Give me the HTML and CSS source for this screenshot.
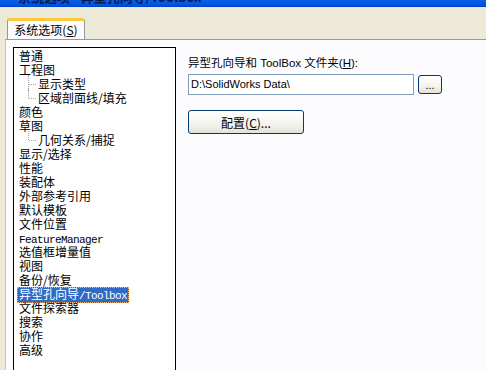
FILE: index.html
```html
<!DOCTYPE html>
<html lang="zh-CN">
<head>
    <meta charset="UTF-8">
    <title>系统选项 - 异型孔向导/Toolbox</title>
    <link rel="stylesheet" href="styles.css">
</head>
<body>

    <div class="titlebar">
        <span class="title-text">系统选项 - 异型孔向导/Toolbox</span>
    </div>

    <div class="dialog">
        <div class="tabs">
            <div class="tab">系统选项(<u>S</u>)</div>
        </div>

        <div class="panel">
            <ul class="tree">
                <li>普通</li>
                <li>工程图</li>
                <li class="child">显示类型</li>
                <li class="child last">区域剖面线/填充</li>
                <li>颜色</li>
                <li>草图</li>
                <li class="child last">几何关系/捕捉</li>
                <li>显示/选择</li>
                <li>性能</li>
                <li>装配体</li>
                <li>外部参考引用</li>
                <li>默认模板</li>
                <li>文件位置</li>
                <li><span class="mono">FeatureManager</span></li>
                <li>选值框增量值</li>
                <li>视图</li>
                <li>备份/恢复</li>
                <li><span class="selected">异型孔向导<span class="mono">/Toolbox</span></span></li>
                <li>文件探索器</li>
                <li>搜索</li>
                <li>协作</li>
                <li>高级</li>
            </ul>

            <div class="options">
                <div class="label">异型孔向导和 ToolBox 文件夹(<u>H</u>):</div>
                <div class="path-row">
                    <div class="textbox">D:\SolidWorks Data\</div>
                    <button class="btn btn-small">...</button>
                </div>
                <button class="btn btn-config">配置(<u>C</u>)...</button>
            </div>
        </div>
    </div>

</body>
</html>
```

FILE: styles.css
```css
body {
    margin: 0;
    width: 486px;
    height: 370px;
    overflow: hidden;
    background-color: #ECE9D8;
    font-family: "Noto Sans CJK SC", sans-serif;
    font-size: 12px;
    color: #000;
}

.titlebar {
    height: 7px;
    overflow: hidden;
    background: linear-gradient(to bottom, #0A5FE8, #0053E0 70%, #003FC8);
}

.title-text {
    display: block;
    margin-top: -11px;
    padding-left: 18px;
    font-weight: bold;
    font-size: 13px;
    line-height: 16px;
    color: #0A1A50;
}

.dialog {
    margin-left: 5px;
}

.tabs {
    display: flex;
    padding: 11px 0 0 2px;
    height: 21px;
}

.tab {
    width: 76px;
    height: 18px;
    background-color: #FCFCFE;
    border: 1px solid #919B9C;
    border-bottom: none;
    border-top: 3px solid #FFC83C;
    border-radius: 3px 3px 0 0;
    line-height: 18px;
    text-align: center;
    position: relative;
    z-index: 1;
    margin-bottom: -1px;
}

.panel {
    display: flex;
    align-items: flex-start;
    height: 330px;
    background-color: #FCFCFE;
    border-top: 1px solid #919B9C;
    border-left: 1px solid #C8C6BC;
    padding: 7px 0 0 7px;
}

.tree {
    list-style: none;
    margin: 0;
    padding: 1px 0 0 0;
    width: 161px;
    height: 340px;
    background-color: #fff;
    border: 1px solid #000;
}

.tree li {
    position: relative;
    height: 14px;
    line-height: 14px;
    padding-left: 5px;
    white-space: nowrap;
}

.tree li.child {
    padding-left: 24px;
}

/* dotted tree lines */
.tree li.child::before {
    content: "";
    position: absolute;
    left: 14px;
    top: -2px;
    height: calc(100% + 2px);
    border-left: 1px dotted #A0A0A0;
}

.tree li.child.last::before {
    height: 9px;
}

.tree li.child::after {
    content: "";
    position: absolute;
    left: 15px;
    top: 7px;
    width: 7px;
    border-top: 1px dotted #A0A0A0;
}

.mono {
    font-family: "Liberation Mono", monospace;
    font-size: 11px;
    letter-spacing: -0.6px;
}

.selected {
    display: inline-block;
    margin-left: -2px;
    padding: 0 2px;
    background-color: #316AC5;
    color: #fff;
    outline: 1px dotted #E8B070;
    outline-offset: -1px;
}

.options {
    margin-left: 12px;
    padding-top: 9px;
}

.label {
    font-family: "Liberation Sans", "Noto Sans CJK SC", sans-serif;
    font-size: 11.5px;
    line-height: 14px;
}

.path-row {
    display: flex;
    align-items: center;
    gap: 4px;
    margin-top: 4px;
}

.textbox {
    width: 222px;
    height: 19px;
    border: 1px solid #7F9DB9;
    background-color: #fff;
    padding-left: 2px;
    font-family: "Liberation Sans", sans-serif;
    font-size: 11px;
    line-height: 19px;
}

.btn {
    border: 1px solid #003C74;
    border-radius: 3px;
    background: linear-gradient(to bottom, #FFFFFF, #F4F3EE 60%, #E3E1D8);
    font-family: "Noto Sans CJK SC", sans-serif;
    font-size: 12px;
    color: #000;
    padding: 0;
}

.btn-small {
    width: 24px;
    height: 19px;
    line-height: 14px;
    font-family: "Liberation Sans", sans-serif;
    font-size: 11px;
}

.btn-config {
    display: block;
    width: 116px;
    height: 24px;
    margin-top: 15px;
}
```
